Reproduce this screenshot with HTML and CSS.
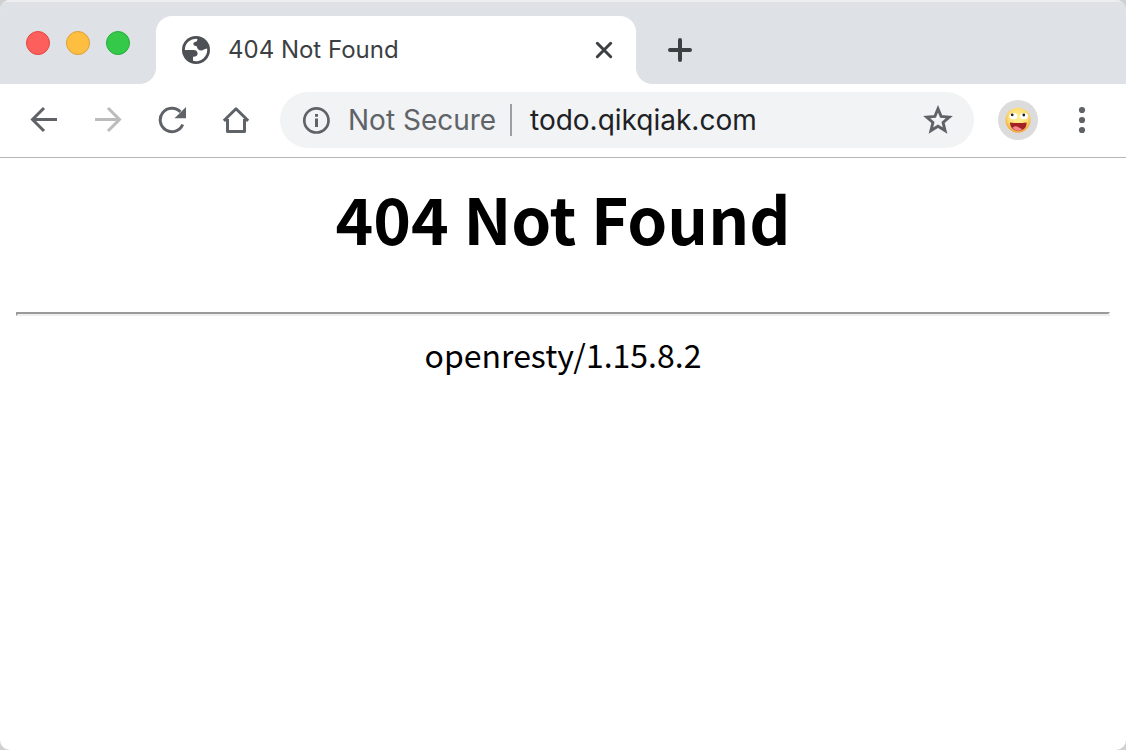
FILE: index.html
```html
<!DOCTYPE html>
<html lang="en">
<head>
<meta charset="utf-8">
<title>404 Not Found</title>
<link rel="stylesheet" href="styles.css">
</head>
<body>
<div class="window">
  <header class="tabstrip">
    <div class="lights"><span class="light red"></span><span class="light yellow"></span><span class="light green"></span></div>
    <div class="tab">
      <svg class="globe" width="28" height="28" viewBox="0 0 28 28"><circle cx="14" cy="14" r="14" fill="#4d5156"/><path fill="#fff" d="M2.8 14A11.2 11.2 0 0 1 15.4 2.9C15.4 4.6 14.6 5.8 12.4 6.2 11.4 6.6 11.2 7.5 11.5 8.6 11.9 9.9 13 10 14.8 10.3 15.2 12.7 16.4 14.6 19.2 14.6 21.6 14.6 22.2 12.9 25.1 12.6A11.2 11.2 0 0 1 11 24.8V20.8C13.6 20.9 15.6 20 15.6 17.6 15.6 15 13.9 14 11.5 14z"/></svg>
      <span class="tab-title">404 Not Found</span>
      <svg class="close" width="20" height="20" viewBox="0 0 20 20"><path d="M3.3 3.3l13.4 13.4M16.7 3.3L3.3 16.7" stroke="#3c4043" stroke-width="3" stroke-linecap="round"/></svg>
    </div>
    <svg class="plus" width="24" height="24" viewBox="0 0 24 24"><path d="M12 2v20M2 12h20" stroke="#3c4043" stroke-width="4" stroke-linecap="round"/></svg>
  </header>
  <nav class="toolbar">
    <svg width="28" height="28" viewBox="0 0 28 28" fill="none" stroke="#5f6368" stroke-width="3"><path d="M27 13.5H3M14 2L2.5 13.5 14 25"/></svg>
    <svg width="28" height="28" viewBox="0 0 28 28" fill="none" stroke="#babcbe" stroke-width="3"><path d="M1 13.5h24M14 2l11.5 11.5L14 25"/></svg>
    <svg width="28" height="28" viewBox="0 0 28 28"><path d="M24.7 18.5A11.7 11.7 0 1 1 22.4 5.9" fill="none" stroke="#5f6368" stroke-width="3"/><path fill="#5f6368" d="M28 1v11.2H16.5z"/></svg>
    <svg width="28" height="28" viewBox="0 0 28 28" fill="none" stroke="#5f6368" stroke-width="3"><path d="M5.5 13v12.5h17V13M1.8 14.8L14 2.8l12.2 12M2 14h3.5M22.5 14H26" stroke-linejoin="round"/></svg>
    <div class="omnibox">
      <svg class="info" width="28" height="28" viewBox="0 0 28 28"><circle cx="14.4" cy="14.4" r="12.1" fill="none" stroke="#5f6368" stroke-width="2.7"/><path fill="#5f6368" d="M13 8h3v2.7h-3zM13 12.6h3v8.4h-3z"/></svg>
      <span class="status">Not Secure</span>
      <span class="divider"></span>
      <span class="url">todo.qikqiak.com</span>
      <svg class="star" width="30" height="30" viewBox="0 0 30 30"><path d="M15 3.8l3.1 7.6 8.2.7-6.2 5.4 2 8.1-7.1-4.4-7.1 4.4 2-8.1-6.2-5.4 8.2-.7z" fill="none" stroke="#5f6368" stroke-width="2.9"/></svg>
    </div>
    <div class="avatar">
      <svg width="26" height="26" viewBox="0 0 26 26"><defs><radialGradient id="face" cx=".5" cy=".4" r=".6"><stop offset="0" stop-color="#fff09a"/><stop offset=".65" stop-color="#fddd70"/><stop offset="1" stop-color="#efa23b"/></radialGradient></defs><circle cx="13" cy="13.2" r="12.5" fill="url(#face)"/><ellipse cx="8.3" cy="9.2" rx="4" ry="3.1" fill="#fff"/><ellipse cx="19" cy="9.2" rx="4" ry="3.1" fill="#fff"/><circle cx="7.2" cy="7.8" r="1.4" fill="#222"/><circle cx="18.8" cy="8" r="1.4" fill="#222"/><path d="M5 15.4q8 1.2 16.5 0c.6 5-3 8.2-8.2 8.2S5 20 5 15.4z" fill="#a32025"/><path d="M7.5 20.8c2-2.2 4.2-2 6-.5s3 1.5 3.8 1.6c-3 2.4-7 2.4-9.8-1.1z" fill="#f48792"/></svg>
    </div>
    <svg class="menu" width="8" height="28" viewBox="0 0 8 28" fill="#5f6368"><circle cx="4" cy="4" r="3.1"/><circle cx="4" cy="14" r="3.1"/><circle cx="4" cy="24" r="3.1"/></svg>
  </nav>
  <main class="page">
    <h1 class="heading">404 Not Found</h1>
    <hr class="rule">
    <p class="server">openresty/1.15.8.2</p>
  </main>
</div>
</body>
</html>
```
FILE: styles.css
```css
* { box-sizing: border-box; }
body { margin: 0; background: #d0d0d0; font-family: Inter, "Liberation Sans", sans-serif; }
svg { display: block; flex: none; }
.window { height: 750px; background: #fff; border-radius: 10px; overflow: hidden; }
.tabstrip { display: flex; height: 84px; padding: 16px 0 0 26px; background: #dee1e6; box-shadow: inset 0 2px 0 #eceef0; }
.lights { display: flex; gap: 16px; width: 130px; padding-top: 15px; }
.light { width: 24px; height: 24px; border-radius: 50%; border: 1px solid; }
.red { background: #fd605c; border-color: #e2463f; }
.yellow { background: #febe40; border-color: #e0a034; }
.green { background: #34c949; border-color: #24ad36; }
.tab { position: relative; display: flex; align-items: center; width: 480px; height: 68px; padding: 0 22px 0 26px; background: #fff; border-radius: 16px 16px 0 0; }
.tab::before, .tab::after { content: ""; position: absolute; bottom: 0; width: 16px; height: 16px; }
.tab::before { left: -16px; background: radial-gradient(circle at 0 0, transparent 15.5px, #fff 16.2px); }
.tab::after { right: -16px; background: radial-gradient(circle at 100% 0, transparent 15.5px, #fff 16.2px); }
.tab-title { margin-left: 18px; font-size: 24px; line-height: 32px; color: #3c4043; white-space: nowrap; }
.close { margin-left: auto; }
.plus { margin: 22px 0 0 32px; }
.toolbar { display: flex; align-items: center; gap: 36px; height: 74px; padding: 0 40px 2px 30px; border-bottom: 1px solid #b5b6b8; }
.omnibox { display: flex; align-items: center; width: 694px; height: 56px; margin-left: -6px; padding: 0 21px 0 22px; border-radius: 28px; background: #f1f3f4; }
.status { width: 148px; margin-left: 18px; padding-top: 1px; font-size: 28px; color: #5f6368; white-space: nowrap; }
.divider { width: 2px; height: 32px; margin-left: 14px; background: #9b9ea2; }
.url { margin-left: 18px; padding-top: 1px; font-size: 28px; color: #202124; white-space: nowrap; }
.star { margin-left: auto; }
.avatar { display: flex; align-items: center; justify-content: center; width: 40px; height: 40px; margin-left: -12px; border-radius: 50%; background: #dcdcdc; }
.menu { margin-left: 4px; }
.page { padding: 12px 16px 16px; font-family: "Noto Sans CJK SC", sans-serif; color: #000; text-align: center; }
.heading { margin: 0; font-size: 64px; line-height: 94px; font-weight: 700; }
.rule { margin: 48px 0 14px; height: 4px; border: 2px solid; border-color: #9a9a9a #eee #eee #9a9a9a; }
.server { margin: 0; font-size: 32px; line-height: 48px; }
```
